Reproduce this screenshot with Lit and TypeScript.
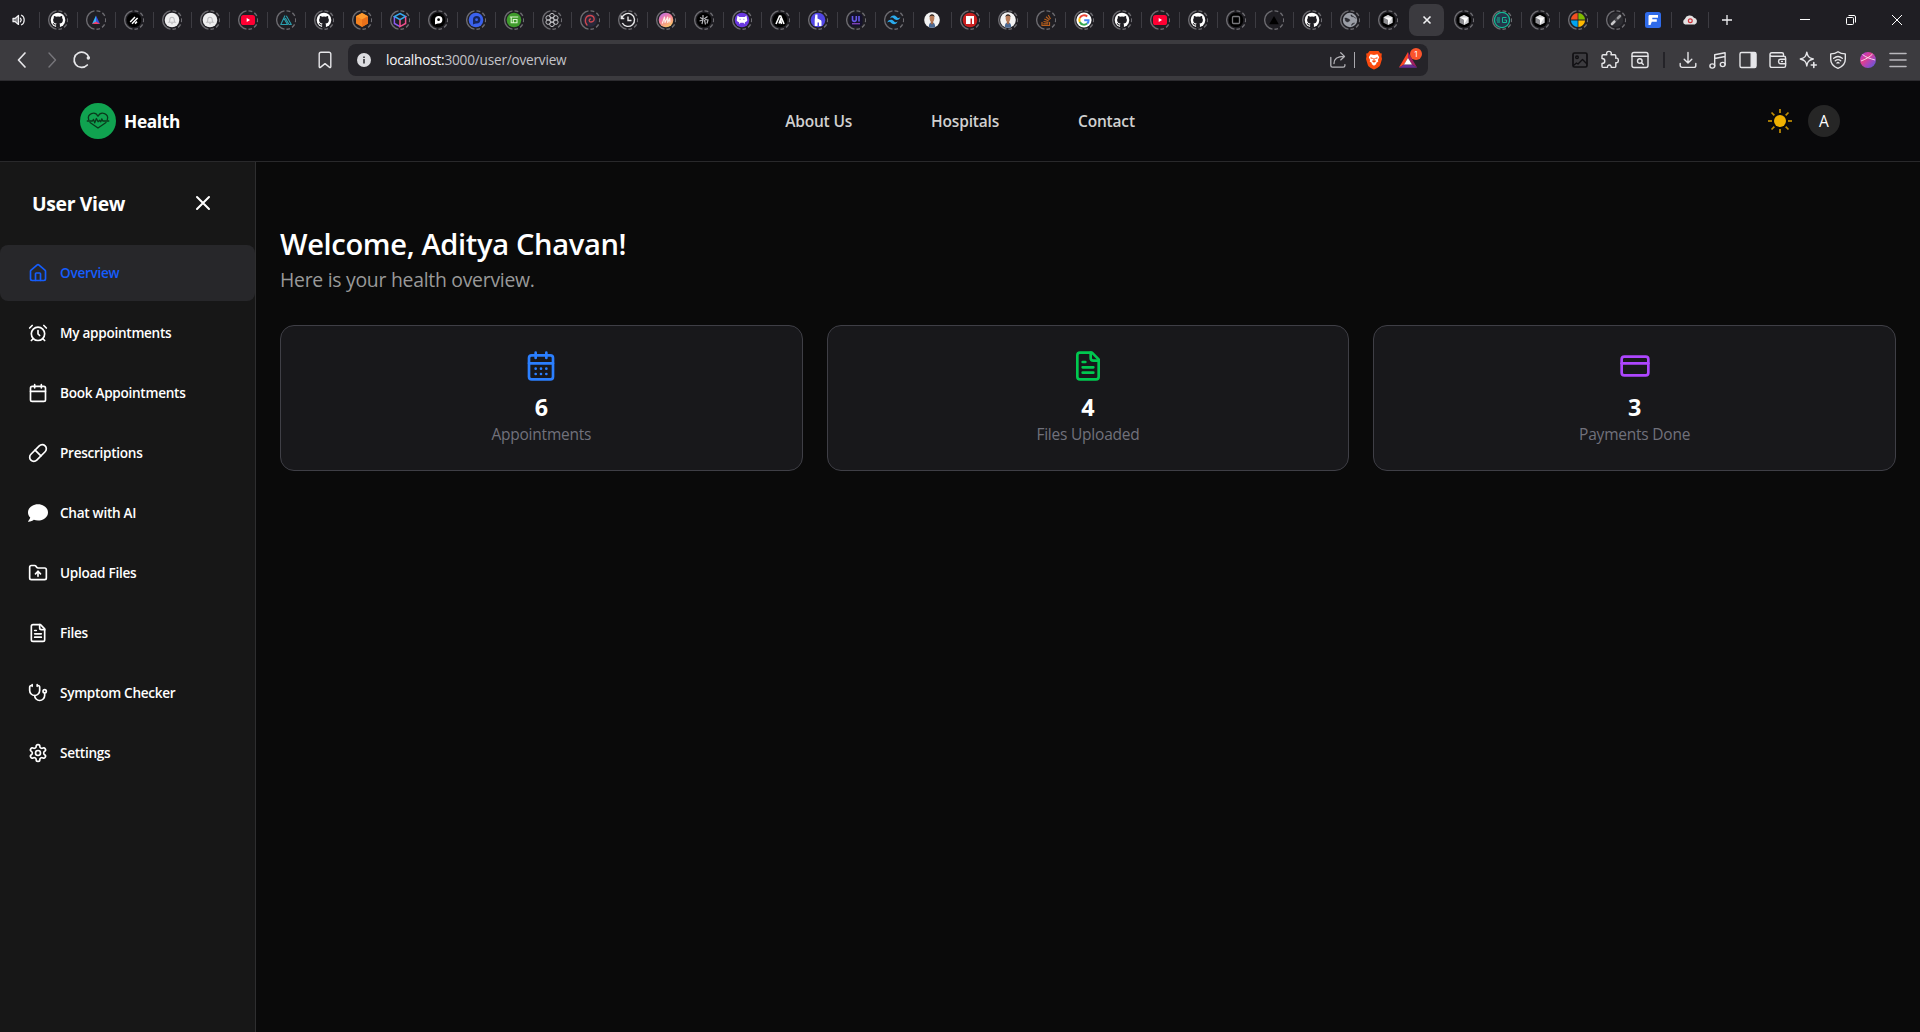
import { LitElement, html, css, svg, TemplateResult, SVGTemplateResult } from "lit";
import { customElement, property } from "lit/decorators.js";
import { classMap } from "lit/directives/class-map.js";

type Glyph = SVGTemplateResult;

/* ---------- favicons: drawn on a 20x20 box, centre 10,10 ---------- */

const disc = (fill: string, inner: Glyph = svg``): Glyph =>
  svg`<circle cx="10" cy="10" r="7.3" fill=${fill}></circle>${inner}`;

const github = svg`<circle cx="10" cy="10" r="7.3" fill="#fff"></circle>
  <path fill="#1f1e23" d="M8.1 17.4V15.3C6.2 15.7 5.7 14.6 5.3 13.9c-.2-.4-.5-.6-.8-.8.9-.3 1.5.4 1.9 1 .4.5.9.7 1.7.4.1-.5.3-.8.5-1-2-.3-3.5-1-3.5-3.6 0-.8.3-1.5.8-2-.1-.3-.3-1 .1-2 .7-.1 1.600.4 2.100.8a7 7 0 0 1 3.800 0c.5-.4 1.400-.9 2.100-.8.4 1 .2 1.700.1 2 .5.5.8 1.200.8 2 0 2.600-1.500 3.300-3.500 3.600.3.3.5.8.5 1.500v2.400z"></path>`;
const triangleColor = svg`<path d="M10 5.500 6 14 10 12.200z" fill="#36b4f5"></path><path d="M10 5.500 14 14 10 12.200z" fill="#3a50e0"></path><path d="M6 14 10 11.400 14 14z" fill="#f0416c"></path>`;
const slashes = disc("#000", svg`<path d="m6.200 12 4.800-5M8 13.800 13.600 8M11 13.600l2-2" stroke="#fff" stroke-width="1.500"></path>`);
const bell = disc("#eeeeef", svg`<path d="M7 12.200c.8-.7.8-1.600.8-2.700a2.200 2.200 0 0 1 4.400 0c0 1.100 0 2 .8 2.700zM9.300 13.600h1.400" fill="none" stroke="#bdbdc0" stroke-width="1.100"></path>`);
const youtube = svg`<rect x="3" y="5" width="14" height="10" rx="2.600" fill="#ff0033"></rect><path d="m8.700 8 3.400 2-3.400 2z" fill="#fff"></path>`;
const tealTriangle = svg`<path d="M9 5.500 4.800 14.500H11.500L8 8.500M10.300 5.800l5 8.700h-2.300L9.300 8" fill="none" stroke="#2b9fae" stroke-width="1.100" stroke-linejoin="round"></path>`;
const orangeCube = svg`<path d="m10 3 6 3.200v7.400L10 17l-6-3.400V6.200z" fill="#f58220"></path><path d="m10 3 6 3.200-6 3.300-6-3.300z" fill="#ff9a2e"></path><path d="M10 9.500 16 6.200v7.400L10 17z" fill="#e8701a"></path>`;
const neonCube = svg`<path d="M4.400 6.500v7L10 16.600" fill="none" stroke="#8c5bf0" stroke-width="1.500"></path><path d="m10 3.500 5.600 3L10 9.700 4.400 6.500z" fill="none" stroke="#36a8f0" stroke-width="1.500"></path><path d="M15.600 6.500v7L10 16.600V9.700" fill="none" stroke="#f0508c" stroke-width="1.500"></path>`;
const pin = (bg: string, ring: string, dot: string): Glyph =>
  disc(bg, svg`<path d="M7 14.500V9.700a3.700 3.700 0 1 1 3.700 3.700c-1.200 0-2 .2-3.700 1.100z" fill=${ring}></path><circle cx="10.600" cy="9.700" r="1.400" fill=${dot}></circle>`);
const greenNode = disc("#3f9b2c", svg`<path d="M5.800 7h8.400M7.200 7v5.800H13v-3.300H9.300v3" fill="none" stroke="#d9f5cc" stroke-width="1.100"></path>`);
const knot = svg`<g fill="none" stroke="#c4c4c8" stroke-width="1"><circle cx="10" cy="10" r="2.200"></circle><circle cx="10" cy="5.700" r="2.300"></circle><circle cx="10" cy="14.300" r="2.300"></circle><circle cx="6.200" cy="7.900" r="2.300"></circle><circle cx="13.800" cy="7.900" r="2.300"></circle><circle cx="6.200" cy="12.100" r="2.300"></circle><circle cx="13.800" cy="12.100" r="2.300"></circle></g>`;
const redSwirl = svg`<circle cx="10" cy="10" r="7" fill="#27283a"></circle><path d="M7 15c-3-3.500-1.800-9.500 3.200-9.500 4.600 0 5.600 6.300.8 6.500-2.200 0-2.400-2.800-.6-3" fill="none" stroke="#d2474e" stroke-width="1.300" stroke-linecap="round"></path>`;
const history = svg`<path d="M3.800 8A6.500 6.500 0 1 1 4.300 13M3.300 5.500v3h3M10 6.500V10.500h3.500" fill="none" stroke="#e8e8ea" stroke-width="1.400"></path>`;
const gradientM = svg`<defs><linearGradient id="gm" x1="0" y1="0" x2=".6" y2="1"><stop offset="0" stop-color="#b06cf5"></stop><stop offset=".5" stop-color="#f5809c"></stop><stop offset="1" stop-color="#fbc46b"></stop></linearGradient></defs><circle cx="10" cy="10" r="7.300" fill="url(#gm)"></circle><path d="m6.300 13.500 2.200-6.500.5 5.500 2.700-5.500v5.500l2.200-4.500v4.500" fill="none" stroke="#fdf0ea" stroke-width="1.100" stroke-linejoin="round"></path>`;
const graphK = disc("#000", svg`<path d="M9 5v4L6 7.500M5.500 11l3-1M9 9.500 8 14M10 9l3.500-2.500M11 9.500l3 .5-1 3.500M10.500 10l1 4.500" fill="none" stroke="#b8b8bc" stroke-width="1.200"></path>`);
const purpleCat = disc("#6a38e0", svg`<path d="M5.500 5.500 7.300 7h5.400l1.800-1.500.8 5c-.8 1.400-1.800 1.200-2.300 1.700l-.5 2-1-1.500H8.500l-1 1.500-.5-2c-.5-.5-1.500-.3-2.300-1.700z" fill="#fff"></path><path d="M7.500 9.300h1.300M11.200 9.300h1.300" stroke="#a88cf0" stroke-width="1"></path>`);
const letterA = disc("#000", svg`<path d="M6 14 9.500 6h1.200L14 14M9 13.500l1.500-4 1 4.500" fill="none" stroke="#fff" stroke-width="1.600"></path>`);
const houseH = disc("#5146e5", svg`<path d="M7.300 4.500h2.200v4l3 1.500c.8.400 1 .900 1 1.700V16H11v-3.500H9.500V16H6.700v-6z" fill="#fff"></path>`);
const uiMark = svg`<rect x="3.500" y="3.500" width="13" height="13" rx="4" fill="#15122b"></rect><path d="M6.500 6v3.500a1.800 1.800 0 0 0 3.800 0V6M13 6v5.500" fill="none" stroke="#6658e8" stroke-width="1.600"></path><path d="M6 13.700h8" stroke="#7c3fb5" stroke-width="1.400"></path>`;
const tailwind = svg`<path d="M6 8.600c.6-2 1.800-3 3.600-3 2.700 0 3 2 4.300 2.400 1 .2 1.800-.1 2.500-1-.6 2-1.800 3-3.600 3-2.700 0-3-2-4.300-2.400-1-.2-1.800.1-2.500 1zM3.200 12.800c.6-2 1.800-3 3.600-3 2.700 0 3 2 4.300 2.400 1 .2 1.800-.1 2.500-1-.6 2-1.800 3-3.600 3-2.700 0-3-2-4.300-2.400-1-.2-1.800.1-2.500 1z" fill="#2bacee"></path>`;
const portrait = svg`<circle cx="10" cy="10" r="7.800" fill="#f3f3f3"></circle><path d="M6.800 17c0-3.300 1.200-4.500 3.200-4.500s3.200 1.200 3.200 4.500a7.800 7.800 0 0 1-6.400 0z" fill="#4c6a94"></path><path d="M8.800 10.500h2.400v3L10 14.500 8.800 13.500z" fill="#a56c4b"></path><ellipse cx="10" cy="8.300" rx="2.300" ry="3.500" fill="#b77b58"></ellipse><path d="M7.500 7.500C7 3.200 13 3.200 12.500 7.500c-.4-1.300-1-1.700-2.500-1.700s-2.100.4-2.500 1.700z" fill="#2b211c"></path>`;
const npm = disc("#c91f1f", svg`<path d="M6 6h8v8h-2V8.500h-1.500V14H6z" fill="#fff"></path>`);
const stack = svg`<path d="M6 12v3.500h7.500V12M7.300 13.800h4.800M7.500 11.500l4.800.8M8.300 9l4.400 2M10 6.700l3.500 3.200M12.300 5l2.200 4" fill="none" stroke="#b85f1c" stroke-width="1.200"></path>`;
const google = svg`<circle cx="10" cy="10" r="7.600" fill="#fff"></circle><g fill="none" stroke-width="2"><path d="M13.200 6.500A4.700 4.700 0 0 0 5.800 8" stroke="#ea4335"></path><path d="M5.800 8a4.700 4.700 0 0 0 0 4" stroke="#fbbc05"></path><path d="M5.800 12a4.700 4.700 0 0 0 7.300 1.600" stroke="#34a853"></path><path d="M13.100 13.600c1.200-1 1.600-2.200 1.500-3.300H10.200" stroke="#4285f4"></path></g>`;
const squareMark = disc("#000", svg`<rect x="6.500" y="6.500" width="7" height="7" rx="1" fill="none" stroke="#77777b" stroke-width="1.300"></rect>`);
const vercel = svg`<path d="m10 6 4.800 8.300H5.200z" fill="#000"></path>`;
const globe = svg`<circle cx="10" cy="10" r="7.200" fill="#9b9ea6"></circle><path d="M4.800 8c2-.2 2.500.5 4 1s1.300 2 0 2.500S7.500 12.500 5.500 11zM11 4.500c-.5 1.500.5 2.300 2 2.300s1.500 1.500 3 1.500M11.500 15.500c0-1.800 1-2.500 3.200-2.500z" fill="#2d2d33" stroke="#2d2d33" stroke-width=".4"></path>`;
const cursor = disc("#000", svg`<path d="m5.500 7.300 4.500-2.300 4.500 2.300v5.400L10 15l-4.500-2.300z" fill="#8e8e92"></path><path d="M5.500 7.300 10 5l4.500 2.300v5.400L10 15V9.800z" fill="#cfcfd2"></path><path d="M6 7.400h8.300L10 14.500V9.700z" fill="#fff"></path>`);
const tealRing = svg`<circle cx="10" cy="10" r="7.600" fill="#24364a" stroke="#15b895" stroke-width="1.300"></circle><path d="M5 8h3M4.500 10h3.500M5 12h3M14.500 7.500h-4v5h4v-2.500h-2" fill="none" stroke="#15b895" stroke-width="1"></path>`;
const msTiles = svg`<path d="M9.600 3v6.600H2.900A7.200 7.200 0 0 1 9.600 3z" fill="#f25022"></path><path d="M10.400 3v6.600h6.700A7.200 7.200 0 0 0 10.400 3z" fill="#7fba00"></path><path d="M9.600 17v-6.600H2.900A7.200 7.200 0 0 0 9.600 17z" fill="#00a4ef"></path><path d="M10.400 17v-6.600h6.700a7.200 7.200 0 0 1-6.700 6.600z" fill="#ffb900"></path>`;
const pen = svg`<circle cx="10" cy="10" r="7.200" fill="#2c2c31"></circle><path d="m6 14 2.500-2.500" stroke="#c9c9cb" stroke-width="2.600" stroke-linecap="round"></path><path d="m9.200 10.800 3-3" stroke="#4a4a4f" stroke-width="3"></path><path d="m12 8 2-2" stroke="#98989b" stroke-width="2.600" stroke-linecap="round"></path>`;
const blueF = svg`<rect x="2" y="2" width="16" height="16" rx="2.500" fill="#2f6bea"></rect><path d="M5.500 15V6.500c0-1 .4-1.500 1.500-1.500h8v2.700H9.300v1.500h4.500v2.600H8.800L7.500 15z" fill="#fff"></path>`;
const cloud = svg`<path d="M5.200 14.500a3 3 0 0 1-.4-5.500A5.200 5.200 0 0 1 14 7.800a3.500 3.500 0 0 1 .8 6.700z" fill="#e4e2e2"></path><circle cx="10.300" cy="10.800" r="1.900" fill="none" stroke="#d0343c" stroke-width="1.200"></circle>`;

interface TabInfo { icon: Glyph; plain?: boolean; active?: boolean; narrow?: boolean }

const t = (icon: Glyph, plain = false, narrow = false): TabInfo => ({ icon, plain, narrow });

const TABS: TabInfo[] = [
  t(github), t(triangleColor), t(slashes), t(bell), t(bell), t(youtube), t(tealTriangle), t(github),
  t(orangeCube), t(neonCube), t(pin("#000", "#fff", "#000")), t(pin("#3b62ee", "#16255c", "#3b62ee")),
  t(greenNode), t(knot), t(redSwirl), t(history), t(gradientM), t(graphK), t(purpleCat), t(letterA),
  t(houseH), t(uiMark), t(tailwind), t(portrait, true), t(npm), t(portrait), t(stack), t(google),
  t(github), t(youtube), t(github), t(squareMark), t(vercel), t(github), t(globe), t(cursor),
  { icon: svg``, active: true },
  t(cursor), t(tealRing), t(cursor), t(msTiles), t(pen, false, true), t(blueF, true, true), t(cloud, true, true),
];

/* ---------- outline icons: 24x24 box ---------- */

const icons: Record<string, Glyph> = {
  house: svg`<path d="M15 21v-8a1 1 0 0 0-1-1h-4a1 1 0 0 0-1 1v8"></path><path d="M3 10a2 2 0 0 1 .709-1.528l7-5.999a2 2 0 0 1 2.582 0l7 5.999A2 2 0 0 1 21 10v9a2 2 0 0 1-2 2H5a2 2 0 0 1-2-2z"></path>`,
  alarm: svg`<circle cx="12" cy="13" r="8"></circle><path d="M12 9v4l2 2M5 3 2 6M22 6l-3-3M6.380 18.700 4 21M17.640 18.670 20 21"></path>`,
  calendar: svg`<path d="M8 2v4M16 2v4M3 10h18"></path><rect width="18" height="18" x="3" y="4" rx="2"></rect>`,
  pill: svg`<path d="m10.500 20.500 10-10a4.950 4.950 0 1 0-7-7l-10 10a4.950 4.950 0 1 0 7 7Z"></path><path d="m8.500 8.500 7 7"></path>`,
  folderUp: svg`<path d="M20 20a2 2 0 0 0 2-2V8a2 2 0 0 0-2-2h-7.900a2 2 0 0 1-1.690-.9L9.600 3.900A2 2 0 0 0 7.930 3H4a2 2 0 0 0-2 2v13a2 2 0 0 0 2 2Z"></path><path d="M12 10v6"></path><path d="m9 13 3-3 3 3"></path>`,
  file: svg`<path d="M15 2H6a2 2 0 0 0-2 2v16a2 2 0 0 0 2 2h12a2 2 0 0 0 2-2V7Z"></path><path d="M14 2v4a2 2 0 0 0 2 2h4M10 9H8M16 13H8M16 17H8"></path>`,
  stethoscope: svg`<path d="M11 2v2M5 2v2M5 3H4a2 2 0 0 0-2 2v4a6 6 0 0 0 12 0V5a2 2 0 0 0-2-2h-1"></path><path d="M8 15a6 6 0 0 0 12 0v-3"></path><circle cx="20" cy="10" r="2"></circle>`,
  settings: svg`<path d="M12.220 2h-.44a2 2 0 0 0-2 2v.18a2 2 0 0 1-1 1.730l-.43.25a2 2 0 0 1-2 0l-.15-.08a2 2 0 0 0-2.730.73l-.22.38a2 2 0 0 0 .73 2.730l.15.1a2 2 0 0 1 1 1.720v.51a2 2 0 0 1-1 1.740l-.15.09a2 2 0 0 0-.73 2.730l.22.38a2 2 0 0 0 2.730.73l.15-.08a2 2 0 0 1 2 0l.43.25a2 2 0 0 1 1 1.730V20a2 2 0 0 0 2 2h.44a2 2 0 0 0 2-2v-.18a2 2 0 0 1 1-1.730l.43-.25a2 2 0 0 1 2 0l.15.08a2 2 0 0 0 2.730-.73l.22-.39a2 2 0 0 0-.73-2.730l-.15-.08a2 2 0 0 1-1-1.740v-.5a2 2 0 0 1 1-1.740l.15-.09a2 2 0 0 0 .73-2.730l-.22-.38a2 2 0 0 0-2.730-.73l-.15.08a2 2 0 0 1-2 0l-.43-.25a2 2 0 0 1-1-1.730V4a2 2 0 0 0-2-2z"></path><circle cx="12" cy="12" r="3"></circle>`,
  calendarDays: svg`<path d="M8 2v4M16 2v4"></path><rect width="18" height="18" x="3" y="4" rx="2"></rect><path d="M3 10h18M8 14h.01M12 14h.01M16 14h.01M8 18h.01M12 18h.01M16 18h.01"></path>`,
  card: svg`<rect width="20" height="14" x="2" y="5" rx="2"></rect><path d="M2 10h20"></path>`,
  close: svg`<path d="M18 6 6 18M6 6l12 12"></path>`,
};

const lucide = (name: string): TemplateResult => html`<svg viewBox="0 0 24 24" fill="none" stroke="currentColor" stroke-width="2" stroke-linecap="round" stroke-linejoin="round">${icons[name]}</svg>`;

const chatBubble = html`<svg viewBox="0 0 512 512" fill="currentColor"><path d="M256 32C114.600 32 0 125.100 0 240c0 49.600 21.400 95 57 130.700C44.500 421.100 2.700 466 2.200 466.500c-2.200 2.300-2.800 5.700-1.500 8.700S4.800 480 8 480c66.300 0 116-31.800 140.600-51.400 32.700 12.300 69 19.400 107.400 19.400 141.400 0 256-93.100 256-208S397.400 32 256 32z"></path></svg>`;

const px20 = (body: Glyph): TemplateResult => html`<svg class="tool" width="20" height="20" viewBox="0 0 20 20" fill="none" stroke="currentColor" stroke-width="1.4" stroke-linecap="round" stroke-linejoin="round">${body}</svg>`;

/* ---------- browser chrome ---------- */

@customElement("tab-strip")
export class TabStrip extends LitElement {
  static styles = css`
    :host { display: flex; height: 40px; background: #1f1e23; color: #f0f0f2; }
    svg { display: block; flex: none; }
    .first, .tab, .win { display: flex; align-items: center; justify-content: center; }
    .first { width: 39px; padding-right: 1px; box-sizing: border-box; }
    .tab { width: 38px; box-sizing: border-box; background: linear-gradient(#3d3c42, #3d3c42) 0 12px / 1px 16px no-repeat; }
    .tab.narrow { width: 37px; padding-left: 1px; }
    .tab.active { padding: 4px 1px 4px 2px; background: none; }
    .tab.after { background: none; }
    .pill { flex: 1; height: 32px; border-radius: 8px; background: #3b3a3f; display: flex; align-items: center; justify-content: center; }
    .new { width: 37px; }
    .gap { flex: 1; }
    .win { width: 46px; }
  `;

  private renderTab(tab: TabInfo, index: number) {
    if (tab.active) {
      return html`<div class="tab active"><div class="pill">
        <svg width="10" height="10" viewBox="0 0 10 10" stroke="currentColor" stroke-width="1.6"><path d="m1.500 1.500 7 7M8.500 1.500l-7 7"></path></svg>
      </div></div>`;
    }
    const cls = { tab: true, narrow: !!tab.narrow, after: !!TABS[index - 1]?.active };
    const ring = svg`<path d="M8.500 .900A9.200 9.200 0 0 0 8.500 19.100" fill="none" stroke="#6c6b70" stroke-width="1.350"></path>
      <path d="M10.500 .800A9.200 9.200 0 0 1 10.500 19.200" fill="none" stroke="#6c6b70" stroke-width="1.350" stroke-dasharray="3.900 2.400"></path>`;
    return html`<div class=${classMap(cls)}><svg width="20" height="20" viewBox="0 0 20 20">${tab.plain ? svg`` : ring}${tab.icon}</svg></div>`;
  }

  render() {
    return html`
      <div class="first"><svg width="14" height="12" viewBox="0 0 14 12" fill="none" stroke="currentColor" stroke-width="1.200" stroke-linejoin="round"><path d="M1 4.300h2.300L6.500 1.500v9L3.300 7.700H1z" fill="#8a8a8e"></path><path d="M8.300 4.200c1 1 1 2.600 0 3.600M9.500 1.200c3.600 1.600 3.600 8 0 9.600" stroke-linecap="round"></path></svg></div>
      ${TABS.map((tab, i) => this.renderTab(tab, i))}
      <div class="tab new"><svg width="10" height="10" viewBox="0 0 10 10" stroke="currentColor" stroke-width="1.300"><path d="M5 0v10M0 5h10"></path></svg></div>
      <div class="gap"></div>
      <div class="win"><svg width="10" height="10" viewBox="0 0 10 10" stroke="#fff"><path d="M0 4.500h10"></path></svg></div>
      <div class="win"><svg width="10" height="10" viewBox="0 0 10 10" fill="none" stroke="#fff"><rect x=".5" y="2.500" width="7" height="7" rx="1"></rect><path d="M2.500.5h5.500a1.500 1.500 0 0 1 1.500 1.500v5.500"></path></svg></div>
      <div class="win"><svg width="12" height="12" viewBox="0 0 12 12" stroke="#fff"><path d="m1 1 10 10M11 1 1 11"></path></svg></div>
    `;
  }
}

@customElement("address-bar")
export class AddressBar extends LitElement {
  static styles = css`
    :host { display: flex; height: 41px; box-sizing: border-box; background: #3c3b3f; border-bottom: 1px solid #2c2b2f; padding: 0 12px; color: #e6e6e9; align-items: center; }
    svg { display: block; flex: none; overflow: visible; }
    .nav { display: flex; gap: 10px; width: 303px; }
    .dim { color: #77767b; }
    .url { display: flex; align-items: center; box-sizing: border-box; width: 1080px; height: 32px; margin-left: 13px; padding: 0 10px 0 9px; border-radius: 8px; background: #252429; }
    .text { flex: 1; padding: 0 0 1px 15px; font: 13.600px "Open Sans", "Noto Sans", sans-serif; letter-spacing: -0.015em; color: #c3c3c8; }
    .host { color: #f4f4f6; }
    .actions { display: flex; align-items: center; }
    .bar { width: 1px; height: 16px; background: #a9a8ad; margin: 0 9px 0 8px; }
    .rewards { position: relative; margin-left: 14px; }
    .badge { position: absolute; left: 12px; top: -2px; width: 12px; height: 12px; border-radius: 6px; background: #fb542b; color: #fff; font: 8px/12px Inter, sans-serif; text-align: center; }
    .ext { display: flex; align-items: center; gap: 10px; margin-left: auto; }
    .rule { width: 2px; height: 16px; background: #242328; margin: 0 3px; }
    .dark { color: #111013; }
  `;

  render() {
    return html`
      <div class="nav">
        ${px20(svg`<path d="M13 3 6.500 10 13 17" stroke-width="1.700"></path>`)}
        <span class="dim">${px20(svg`<path d="m7 3 6.500 7L7 17"></path>`)}</span>
        ${px20(svg`<path d="M15.300 15A7.600 7.600 0 1 1 17 7.600" stroke-width="1.700"></path><circle cx="16.300" cy="8" r="1.700" fill="currentColor" stroke="none"></circle>`)}
      </div>
      ${px20(svg`<path d="M4.200 4A1.800 1.800 0 0 1 6 2.200h8A1.800 1.800 0 0 1 15.800 4v12.800c0 .8-.7 1-1.200.6L10 13.600l-4.600 3.800c-.5.4-1.200.2-1.200-.6z"></path>`)}
      <div class="url">
        <svg width="14" height="14" viewBox="0 0 14 14"><circle cx="7" cy="7" r="7" fill="#dcdce0"></circle><path d="M7 6v4.500M7 3.400v1.500" stroke="#252429" stroke-width="1.500"></path></svg>
        <span class="text"><span class="host">localhost:</span>3000/user/overview</span>
        <div class="actions">
          <svg width="16" height="16" viewBox="0 0 16 16" fill="none" stroke="#b4b3b8" stroke-width="1.300" stroke-linecap="round" stroke-linejoin="round"><path d="M.8 5.500v8a1.700 1.700 0 0 0 1.700 1.700h10.700a1.700 1.700 0 0 0 1.700-1.700v-.8"></path><path d="M4 11.500C4 7 7 4.400 14 4.400M10.700.8 14.500 4.400l-3.800 3.500"></path></svg>
          <div class="bar"></div>
          <svg width="20" height="20" viewBox="0 0 20 20"><path d="M5.500 1h9l1.700 2.200 1.600.2-.3 3L18 9l-1.800 6c-.6 1.800-4.200 4-6.200 4.500-2-.5-5.600-2.700-6.200-4.500L2 9l.5-2.600-.3-3 1.600-.2z" fill="#fb4a0e"></path><path d="M6.500 4.300 10 5l3.500-.7 1.700 3-1.300 2.800.4 1.300-2.200 1.500.3 1.100L10 15.700l-2.400-1.700.3-1.100-2.200-1.500.4-1.300-1.300-2.800z" fill="#fff"></path><path d="m6.500 7.700 2.200.8M13.500 7.700l-2.200.8M8.300 10.700 10 12l1.700-1.300M10 8v4" stroke="#fb4a0e" stroke-width="1.100" fill="none"></path></svg>
          <div class="rewards">
            <svg width="20" height="20" viewBox="0 0 20 20"><path d="M10 2 10 8 6 14.500.8 17.700z" fill="#ff4724"></path><path d="m10 2 9.200 15.700L14 14.500 10 8z" fill="#9e1f63"></path><path d="M.8 17.700 6 14.500h8l5.200 3.200z" fill="#662d91"></path><path d="m10 8 4 6.500H6z" fill="#fff"></path></svg>
            <span class="badge">1</span>
          </div>
        </div>
      </div>
      <div class="ext">
        <span class="dark">${px20(svg`<rect x="3" y="3" width="14" height="14" rx="1.500" stroke-width="1.700"></rect><circle cx="7" cy="7.300" r="1.300"></circle><path d="m3.500 15.500 3-2.500 1.500 1 4.500-4.500 4 4"></path>`)}</span>
        ${px20(svg`<path d="M3.200 4.700h3.600c0-.4-.4-.9-.2-1.700.4-2.200 4.300-2.200 4.700 0 .1.800-.3 1.300-.3 1.700h3.600c.8 0 1.200.5 1.200 1.200v2.300c.4.100.8-.2 1.300 0 1.700.6 1.700 4 0 4.500-.500.200-.9-.1-1.300 0v3.500c0 .7-.4 1.200-1.200 1.200h-3.300c-.4-.600.100-1.100-.5-1.800-.6-.8-2.200-.8-2.900 0-.5.700-.1 1.200-.500 1.800H3.200c-.8 0-1.200-.5-1.200-1.200v-2.700c1 0 2.800-.4 2.800-2.500S3 8.500 2 8.500V5.900c0-.7.400-1.200 1.200-1.200z"></path>`)}
        ${px20(svg`<rect x="2" y="2.500" width="16" height="15" rx="2"></rect><path d="M2 6.300h16"></path><circle cx="9.800" cy="11" r="2.300"></circle><path d="m11.500 12.800 1.800 1.700"></path>`)}
        <div class="rule"></div>
        ${px20(svg`<path d="M10 2.500v10M6.200 9.200 10 13l3.800-3.800M2.200 13.500v2A1.900 1.900 0 0 0 4.100 17.400h11.800a1.900 1.900 0 0 0 1.900-1.900v-2"></path>`)}
        ${px20(svg`<ellipse cx="4.300" cy="16" rx="2.400" ry="2.100"></ellipse><ellipse cx="14.700" cy="14.500" rx="2.400" ry="2.100"></ellipse><path d="M6.700 16V4.800l10.400-2v11.700M6.700 8.500l10.400-2"></path>`)}
        ${px20(svg`<rect x="2" y="2.500" width="16" height="15" rx="1.500"></rect><path d="M13.200 3h3.300a1 1 0 0 1 1 1v12a1 1 0 0 1-1 1h-3.300z" fill="currentColor"></path>`)}
        ${px20(svg`<path d="M15.500 6V4.300a1.600 1.600 0 0 0-1.600-1.600H3.800a1.800 1.800 0 0 0 0 3.600H16a1.600 1.600 0 0 1 1.600 1.600v7.900a1.600 1.600 0 0 1-1.600 1.600H4a2 2 0 0 1-2-2V4.500"></path><path d="M17.600 9.200h-5a2 2 0 0 0-2 2v.6a2 2 0 0 0 2 2h5M13.600 11.500h.8"></path>`)}
        ${px20(svg`<path d="M8.800 2.200c.6 4 1.800 5.600 6.500 6.800-4.700 1.200-5.900 2.800-6.500 7-.6-4.200-1.800-5.800-6.500-7 4.700-1.200 5.900-2.800 6.500-6.800z"></path><path d="M15.800 12.500v5M13.300 15h5" stroke-width="1.600"></path>`)}
        ${px20(svg`<path d="M10 1.800c2 1.500 4.500 2.100 7.300 2.100v5.300c0 4.500-2.800 7.400-7.300 9.200-4.500-1.800-7.300-4.700-7.300-9.200V3.900c2.800 0 5.300-.6 7.300-2.100z"></path><path d="M5.700 8.300c2.500-2 6.100-2 8.600 0M7.300 10.700c1.600-1.300 3.800-1.300 5.400 0M9 13c.6-.5 1.400-.5 2 0"></path>`)}
        <svg width="20" height="20" viewBox="0 0 20 20"><defs><linearGradient id="orb" x1="0" y1="0" x2="1" y2="1"><stop offset="0.100" stop-color="#b03ad0"></stop><stop offset=".4" stop-color="#e0408c"></stop><stop offset="0.600" stop-color="#b044b8"></stop><stop offset="1" stop-color="#4a5ee0"></stop></linearGradient></defs><circle cx="10" cy="10" r="8" fill="url(#orb)"></circle><path d="M3 11c4-1.500 9-4 11.500-7M4.500 4.500C8 7.500 12 8.500 17 10" fill="none" stroke="#f8d4ea" stroke-width="1"></path></svg>
        ${px20(svg`<path d="M2 3.500h16M2 10h16M2 16.500h16" stroke="#b9b8bd" stroke-width="1.600"></path>`)}
      </div>
    `;
  }
}

/* ---------- health app ---------- */

@customElement("app-header")
export class AppHeader extends LitElement {
  static styles = css`
    :host { display: grid; grid-template-columns: 1fr auto 1fr; align-items: center; box-sizing: border-box; height: 81px; padding: 0 80px; background: #09090b; border-bottom: 1px solid #29292b; }
    svg { display: block; }
    .brand { display: flex; align-items: center; gap: 8px; color: #fff; font-size: 17.300px; font-weight: 700; letter-spacing: -0.02em; }
    .links { display: flex; gap: 79px; color: #d0d0d0; font-size: 15.500px; font-weight: 650; letter-spacing: -0.012em; }
    .right { display: flex; justify-content: flex-end; align-items: center; gap: 16px; }
    .avatar { width: 32px; height: 32px; border-radius: 50%; background: #262626; color: #fff; display: flex; align-items: center; justify-content: center; font-size: 15.500px; }
  `;

  render() {
    const rays = [0, 45, 90, 135, 180, 225, 270, 315];
    return html`
      <div class="brand">
        <svg width="36" height="36" viewBox="0 0 36 36"><circle cx="18" cy="18" r="18" fill="#10a350"></circle>
          <g fill="none" stroke="#0a3a1c" stroke-width="1.300" stroke-linejoin="round" stroke-linecap="round">
            <path d="M8.700 16.800C6.800 11 14.800 7.500 18 13.200c3.200-5.700 11.200-2.200 9.300 3.600"></path>
            <path d="M10 19.500 18 25l8-5.500"></path>
            <path d="M7.300 18h5.200l1-1.600 1.200 3.400 1.700-4.300 1.700 3.200 1.500-1.400 1.200 1.500 1-3 1 2.200h6"></path>
          </g></svg>
        <span>Health</span>
      </div>
      <nav class="links"><span>About Us</span><span>Hospitals</span><span>Contact</span></nav>
      <div class="right">
        <svg width="24" height="24" viewBox="0 0 24 24"><circle cx="12" cy="12" r="6" fill="#f0b100"></circle>${rays.map((a) => svg`<path d="M12 0v4" stroke="#c08d05" stroke-width="1.700" transform="rotate(${a} 12 12)"></path>`)}</svg>
        <div class="avatar">A</div>
      </div>
    `;
  }
}

interface NavItem { label: string; icon: string; active?: boolean }

const NAV: NavItem[] = [
  { label: "Overview", icon: "house", active: true },
  { label: "My appointments", icon: "alarm" },
  { label: "Book Appointments", icon: "calendar" },
  { label: "Prescriptions", icon: "pill" },
  { label: "Chat with AI", icon: "chat" },
  { label: "Upload Files", icon: "folderUp" },
  { label: "Files", icon: "file" },
  { label: "Symptom Checker", icon: "stethoscope" },
  { label: "Settings", icon: "settings" },
];

@customElement("side-bar")
export class SideBar extends LitElement {
  static styles = css`
    :host { display: block; box-sizing: border-box; width: 256px; background: #171717; border-right: 1px solid #2e2e2f; color: #fff; }
    .head { display: flex; align-items: center; justify-content: space-between; height: 83px; padding: 0 40px 0 32px; }
    h2 { margin: 0; font-size: 19.400px; font-weight: 700; letter-spacing: -0.018em; }
    .close { padding-bottom: 1px; }
    .close svg { width: 24px; height: 24px; display: block; }
    nav { display: flex; flex-direction: column; gap: 4px; }
    .item { display: flex; align-items: center; gap: 12px; height: 56px; padding-left: 28px; border-radius: 8px; font-size: 13.600px; font-weight: 650; letter-spacing: -0.021em; }
    .item svg { display: block; width: 20px; height: 20px; }
    .item span { padding-bottom: 1px; }
    .active { background: #27272a; color: #155dfc; }
  `;

  render() {
    return html`
      <div class="head"><h2>User View</h2><span class="close">${lucide("close")}</span></div>
      <nav>${NAV.map((n) => html`<div class=${classMap({ item: true, active: !!n.active })}>${n.icon === "chat" ? chatBubble : lucide(n.icon)}<span>${n.label}</span></div>`)}</nav>
    `;
  }
}

@customElement("stat-card")
export class StatCard extends LitElement {
  @property() icon = "";
  @property() value = "";
  @property() label = "";

  static styles = css`
    :host { display: flex; flex-direction: column; align-items: center; box-sizing: border-box; height: 146px; padding: 24px; border: 1px solid #3f3f46; border-radius: 14px; background: #18181b; }
    svg { display: block; width: 32px; height: 32px; }
    .calendarDays { color: #2b7fff; }
    .file { color: #00c950; }
    .card { color: #ad46ff; }
    .value { margin-top: 9px; font-size: 23.300px; line-height: 32px; font-weight: 700; color: #fff; }
    .label { margin-top: -1px; font-size: 15.500px; line-height: 24px; letter-spacing: -0.014em; color: #71717b; }
  `;

  render() {
    return html`<span class=${this.icon}>${lucide(this.icon)}</span><span class="value">${this.value}</span><span class="label">${this.label}</span>`;
  }
}

@customElement("app-root")
export class AppRoot extends LitElement {
  static styles = css`
    :host { display: flex; flex-direction: column; height: 1032px; overflow: hidden; background: #0a0a0a; font-family: "Open Sans", "Noto Sans", sans-serif; }
    tab-strip, address-bar, app-header { flex: none; }
    .body { display: flex; flex: 1; min-height: 0; }
    side-bar { flex: none; }
    main { flex: 1; padding: 64px 24px 0; }
    h1 { margin: 0; font-size: 29.100px; line-height: 36px; font-weight: 600; letter-spacing: -0.012em; color: #fff; }
    p { margin: 4px 0 31px; font-size: 19.400px; line-height: 28px; letter-spacing: -0.014em; color: #999; }
    .cards { display: grid; grid-template-columns: repeat(3, 1fr); gap: 24px; }
  `;

  render() {
    return html`
      <tab-strip></tab-strip>
      <address-bar></address-bar>
      <app-header></app-header>
      <div class="body">
        <side-bar></side-bar>
        <main>
          <h1>Welcome, Aditya Chavan!</h1>
          <p>Here is your health overview.</p>
          <div class="cards">
            <stat-card icon="calendarDays" value="6" label="Appointments"></stat-card>
            <stat-card icon="file" value="4" label="Files Uploaded"></stat-card>
            <stat-card icon="card" value="3" label="Payments Done"></stat-card>
          </div>
        </main>
      </div>
    `;
  }
}
